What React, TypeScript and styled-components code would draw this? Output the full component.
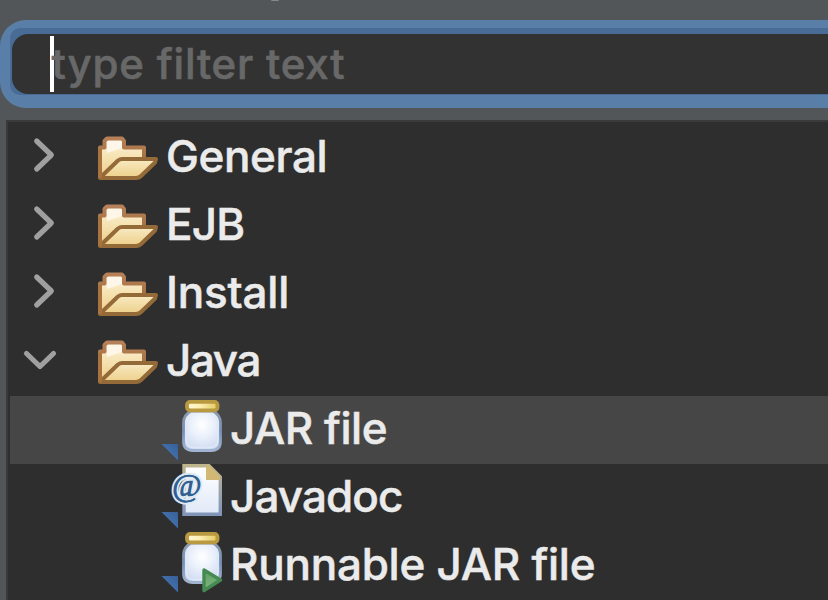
import React from "react";
import styled, { createGlobalStyle } from "styled-components";

const GlobalStyle = createGlobalStyle`
  * { box-sizing: border-box; }
  body {
    margin: 0;
    background: #525659;
    font-family: Inter, "Liberation Sans", sans-serif;
    overflow: hidden;
  }
`;

const Dialog = styled.main`
  display: flex;
  flex-direction: column;
  width: 828px;
  height: 600px;
  overflow: hidden;
  background: #525659;
`;

const Header = styled.header`
  flex: none;
  height: 20px;
  padding-left: 271px;
`;

const Descender = styled.div`
  width: 8px;
  height: 1px;
  border-radius: 0 0 4px 4px;
  background: #85888a;
`;

const FilterRing = styled.div`
  flex: none;
  width: 860px;
  height: 88px;
  padding: 8px 0 14px 10px;
  border-radius: 26px 0 0 26px;
  background: #597fa8;
`;

const FilterEdge = styled.div`
  height: 67px;
  padding: 6px 0 1px 2px;
  border-radius: 10px 0 0 10px;
  background: #486c96;
`;

const FilterField = styled.div`
  display: flex;
  align-items: center;
  height: 60px;
  padding-left: 38px;
  border-radius: 16px 0 0 16px;
  background: #323232;
`;

const Caret = styled.span`
  flex: none;
  width: 4px;
  height: 56px;
  background: #fff;
`;

const Placeholder = styled.span<{ $spacing: number }>`
  margin-left: -2.5px;
  color: #686868;
  font-size: 42px;
  font-weight: 500;
  line-height: 62px;
  letter-spacing: ${(p) => p.$spacing}px;
  -webkit-text-stroke: 0.6px #686868;
  white-space: pre;
`;

const Tree = styled.div`
  flex: none;
  display: flex;
  flex-direction: column;
  width: 822px;
  height: 480px;
  margin: 12px 0 0 6px;
  padding: 2px 0 0 2px;
  border-top: 2px solid #383a3b;
  border-left: 2px solid #383a3b;
  background: #2e2e2e;
`;

const Row = styled.div<{ $selected?: boolean }>`
  flex: none;
  display: flex;
  height: 68px;
  background: ${(p) => (p.$selected ? "#464646" : "transparent")};
`;

const Arrow = styled.svg`
  flex: none;
  width: 60px;
  height: 68px;
`;

const FolderSlot = styled.svg`
  flex: none;
  width: 96px;
  height: 68px;
`;

const LeafSlot = styled.svg`
  flex: none;
  width: 70px;
  height: 68px;
  margin-left: 150px;
`;

const Label = styled.span<{ $spacing: number }>`
  color: #ebebeb;
  font-size: 44px;
  font-weight: 500;
  line-height: 64px;
  letter-spacing: ${(p) => p.$spacing}px;
  -webkit-text-stroke: 0.5px #ebebeb;
  white-space: pre;
`;

function Chevron({ open }: { open?: boolean }) {
  return (
    <Arrow viewBox="10 0 60 68">
      <path
        d={open ? "M26.5 25.5 L40 38.5 L53.5 25.5" : "M36.7 17 L51.3 31 L36.7 45"}
        fill="none"
        stroke="#a0a0a0"
        strokeWidth="5.2"
        strokeLinecap="round"
        strokeLinejoin="round"
      />
    </Arrow>
  );
}

function FolderIcon() {
  return (
    <FolderSlot viewBox="70 0 96 68">
      <defs>
        <linearGradient id="folderBack" x1="0" y1="0" x2="0" y2="1">
          <stop offset="0" stopColor="#fff5df" />
          <stop offset=".4" stopColor="#f7e5b8" />
          <stop offset="1" stopColor="#edce85" />
        </linearGradient>
        <linearGradient id="folderFront" x1="0" y1="0" x2="0" y2="1">
          <stop offset="0" stopColor="#f9ebc5" />
          <stop offset="1" stopColor="#edcf88" />
        </linearGradient>
        <linearGradient id="folderLine" x1="0" y1="0" x2="0" y2="1">
          <stop offset="0" stopColor="#b68058" />
          <stop offset="1" stopColor="#946329" />
        </linearGradient>
      </defs>
      <path
        d="M100 54 V23.5 H104.5 V17 L107 14.5 H122 L124 17 V23.5 H144 V36"
        fill="url(#folderBack)"
        stroke="url(#folderLine)"
        strokeWidth="4"
        strokeLinejoin="round"
      />
      <path d="M107 18 Q107 17 109 17 H120 Q122 17 122 18 V24 L107 29 Z" fill="#fff6ea" />
      <path
        d="M100 53.8 L118 36.5 Q120 35 122 35 H156 L155 38.5 L141 52 Q139 54 136 54 H100 Z"
        fill="url(#folderFront)"
        stroke="#946a39"
        strokeWidth="4"
        strokeLinejoin="round"
      />
      <path d="M100 25 V54" stroke="#a8733e" strokeWidth="4" />
    </FolderSlot>
  );
}

function LinkCorner({ lift = 0 }: { lift?: number }) {
  return <path transform={`translate(0 ${-lift})`} d="M161.5 48 H178 V64.5 Z" fill="url(#cornerFill)" />;
}

function LeafDefs() {
  return (
    <defs>
      <linearGradient id="cornerFill" x1="0" y1="1" x2="1" y2="0">
        <stop offset="0" stopColor="#4b7db9" />
        <stop offset="1" stopColor="#365f99" />
      </linearGradient>
      <radialGradient id="glassFill" cx=".5" cy=".35" r=".7">
        <stop offset="0" stopColor="#ffffff" />
        <stop offset=".45" stopColor="#eaf0fb" />
        <stop offset="1" stopColor="#cbd9ef" />
      </radialGradient>
      <linearGradient id="glassLine" x1="0" y1="0" x2="0" y2="1">
        <stop offset="0" stopColor="#909baa" />
        <stop offset=".5" stopColor="#7590b8" />
        <stop offset="1" stopColor="#a2b4d0" />
      </linearGradient>
      <linearGradient id="lidFill" x1="0" y1="0" x2="1" y2="0">
        <stop offset="0" stopColor="#fff9da" />
        <stop offset=".4" stopColor="#fff0b5" />
        <stop offset="1" stopColor="#e4c860" />
      </linearGradient>
      <linearGradient id="paperFill" x1="0" y1="0" x2="0" y2="1">
        <stop offset="0" stopColor="#ffffff" />
        <stop offset="1" stopColor="#e0e9f8" />
      </linearGradient>
      <linearGradient id="paperLine" x1="0" y1="0" x2="0" y2="1">
        <stop offset="0" stopColor="#bfb58d" />
        <stop offset=".45" stopColor="#a0a6a8" />
        <stop offset="1" stopColor="#8195ba" />
      </linearGradient>
      <linearGradient id="runFill" x1="0" y1="0" x2="0" y2="1">
        <stop offset="0" stopColor="#5c9c63" />
        <stop offset="1" stopColor="#82b982" />
      </linearGradient>
    </defs>
  );
}

function Jar({ lift = 0 }: { lift?: number }) {
  return (
    <g transform={`translate(0 ${4 - lift})`}>
      <path
        d="M191 11 H213 Q220.5 15 220.5 23 V41 Q220.5 50.5 211 50.5 H193 Q183.5 50.5 183.5 41 V23 Q183.5 15 191 11 Z"
        fill="url(#glassFill)"
        stroke="url(#glassLine)"
        strokeWidth="2.8"
      />
      <path d="M186.5 22 V41 Q187 47.5 194 47.5 H210 Q217 47.5 217.5 41 V22" fill="none" stroke="#dfe8f6" strokeWidth="1.5" />
      <rect x="187" y="1.9" width="30.5" height="8.4" rx="3" fill="url(#lidFill)" stroke="#b99a40" strokeWidth="3.8" />
    </g>
  );
}

function JarIcon() {
  return (
    <LeafSlot viewBox="160 0 70 68">
      <LeafDefs />
      <Jar />
      <LinkCorner />
    </LeafSlot>
  );
}

const AtSign = styled.text`
  font-family: "Liberation Serif", serif;
  font-size: 32px;
  font-style: italic;
  font-weight: 400;
`;

function JavadocIcon() {
  return (
    <LeafSlot viewBox="160 0 70 68">
      <path d="M184 1.7 H209 L220.3 13 V50.3 H184 Z" fill="url(#paperFill)" stroke="url(#paperLine)" strokeWidth="3.4" />
      <path d="M206 2 H210 L220 12 V16 H206 Z" fill="#d2b875" />
      <AtSign
        x="172"
        y="31.5"
        fill="#315f91"
        stroke="#dfe9f3"
        strokeWidth="4.5"
        strokeLinejoin="round"
        paintOrder="stroke"
      >
        @
      </AtSign>
      <AtSign x="172" y="31.5" fill="#315f91" stroke="#315f91" strokeWidth=".6">
        @
      </AtSign>
      <LinkCorner />
    </LeafSlot>
  );
}

function RunnableJarIcon() {
  return (
    <LeafSlot viewBox="160 0 70 68">
      <Jar lift={4} />
      <path d="M204 38 L220.5 48 L204 58.5 Z" fill="url(#runFill)" stroke="#458a50" strokeWidth="3.4" strokeLinejoin="round" />
      <LinkCorner lift={4} />
    </LeafSlot>
  );
}

const folders = [
  { name: "General", spacing: -0.4 },
  { name: "EJB", spacing: -0.8 },
  { name: "Install", spacing: -0.2 },
  { name: "Java", spacing: -1.4, open: true },
];

const wizards = [
  { name: "JAR file", spacing: -0.45, icon: JarIcon, selected: true },
  { name: "Javadoc", spacing: -0.9, icon: JavadocIcon },
  { name: "Runnable JAR file", spacing: -0.25, icon: RunnableJarIcon },
];

export default function App() {
  return (
    <Dialog>
      <GlobalStyle />
      <Header>
        <Descender />
      </Header>
      <FilterRing>
        <FilterEdge>
          <FilterField>
            <Caret />
            <Placeholder $spacing={0.8}>type filter text</Placeholder>
          </FilterField>
        </FilterEdge>
      </FilterRing>
      <Tree>
        {folders.map((f) => (
          <Row key={f.name}>
            <Chevron open={f.open} />
            <FolderIcon />
            <Label $spacing={f.spacing}>{f.name}</Label>
          </Row>
        ))}
        {wizards.map(({ name, spacing, icon: Icon, selected }) => (
          <Row key={name} $selected={selected}>
            <Icon />
            <Label $spacing={spacing}>{name}</Label>
          </Row>
        ))}
      </Tree>
    </Dialog>
  );
}
